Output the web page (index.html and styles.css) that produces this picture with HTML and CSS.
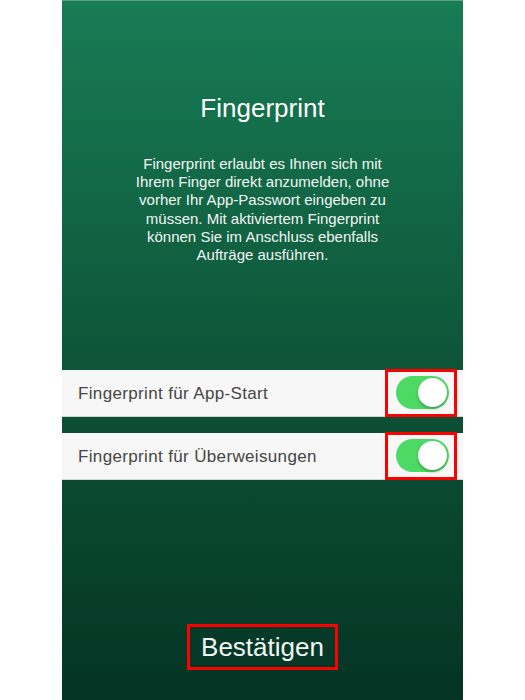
FILE: index.html
```html
<!DOCTYPE html>
<html lang="de">
<head>
<meta charset="utf-8">
<title>Fingerprint</title>
<link rel="stylesheet" href="styles.css">
</head>
<body>
<div class="phone">
  <h1 class="title">Fingerprint</h1>
  <p class="intro">Fingerprint erlaubt es Ihnen sich mit<br>Ihrem Finger direkt anzumelden, ohne<br>vorher Ihr App-Passwort eingeben zu<br>müssen. Mit aktiviertem Fingerprint<br>können Sie im Anschluss ebenfalls<br>Aufträge ausführen.</p>
  <div class="rows">
    <div class="row">
      <span class="row-label">Fingerprint für App-Start</span>
      <span class="mark"><span class="toggle"><span class="knob"></span></span></span>
    </div>
    <div class="row">
      <span class="row-label">Fingerprint für Überweisungen</span>
      <span class="mark"><span class="toggle"><span class="knob"></span></span></span>
    </div>
  </div>
  <div class="spacer"></div>
  <div class="confirm-wrap">
    <span class="confirm">Bestätigen</span>
  </div>
</div>
</body>
</html>
```
FILE: styles.css
```css
html, body {
  margin: 0;
  padding: 0;
  background: #ffffff;
}
body {
  font-family: "Liberation Sans", Arial, sans-serif;
}
.phone {
  width: 401px;
  height: 700px;
  margin-left: 62px;
  background: linear-gradient(to bottom, #187c55 0%, #0e5639 50%, #043424 100%);
  display: flex;
  flex-direction: column;
  box-sizing: border-box;
  border-top: 1px solid #5f9f84;
}
.title {
  margin: 92px 0 0 0;
  font-weight: normal;
  font-size: 26px;
  line-height: 30px;
  color: #ffffff;
  text-align: center;
}
.intro {
  margin: 32px 0 0 0;
  font-size: 15px;
  line-height: 18.2px;
  color: #f2f6f4;
  text-align: center;
}
.rows {
  margin-top: 106px;
  display: flex;
  flex-direction: column;
  gap: 16px;
}
.row {
  height: 47px;
  background: #f7f7f7;
  border-bottom: 1px solid #cfd6d2;
  box-sizing: border-box;
  display: flex;
  align-items: center;
  justify-content: space-between;
  padding-left: 16px;
  padding-right: 6px;
}
.row-label {
  font-size: 17px;
  letter-spacing: 0.35px;
  color: #454545;
  padding-top: 2px;
}
.mark {
  width: 72px;
  height: 48px;
  box-sizing: border-box;
  border: 3px solid #ff0000;
  display: flex;
  align-items: center;
  padding-left: 8px;
  margin-top: -1px;
}
.toggle {
  width: 53px;
  height: 33px;
  border-radius: 17px;
  background: #4cd964;
  position: relative;
  display: block;
}
.knob {
  position: absolute;
  right: 2px;
  top: 2px;
  width: 29px;
  height: 29px;
  border-radius: 50%;
  background: #ffffff;
  box-shadow: 0 2px 3px rgba(0, 0, 0, 0.25);
}
.spacer {
  flex: 1;
}
.confirm-wrap {
  display: flex;
  justify-content: center;
  margin-bottom: 30px;
}
.confirm {
  width: 151px;
  height: 46px;
  box-sizing: border-box;
  border: 3px solid #ff0000;
  display: flex;
  align-items: center;
  justify-content: center;
  font-size: 26px;
  color: #f2f6f4;
}
```
